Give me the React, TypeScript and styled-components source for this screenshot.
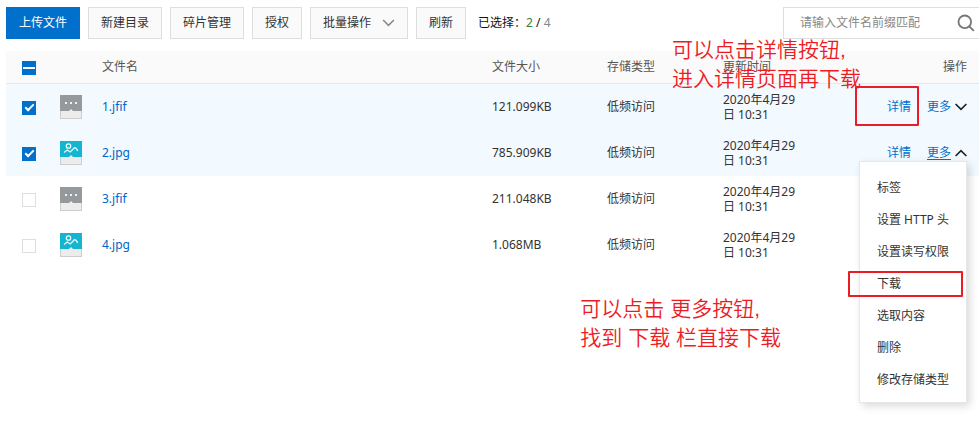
import React, { useEffect, useRef, useState } from 'react';
import styled, { createGlobalStyle, css } from 'styled-components';

const GlobalStyle = createGlobalStyle`
  *, *::before, *::after { box-sizing: border-box; }
  body {
    margin: 0;
    background: #fff;
    color: #333;
    font: 12px/16px "Noto Sans", "Noto Sans CJK SC", sans-serif;
  }
  button, input { font: inherit; }
`;

const Page = styled.main`
  position: relative;
  min-height: 100vh;
  padding: 7px 0 32px 6px;
`;

const Toolbar = styled.div`
  display: flex;
  align-items: center;
  gap: 8px;
  margin-bottom: 12px;
`;

const ToolButton = styled.button<{ $primary?: boolean }>`
  display: flex;
  align-items: center;
  gap: 11px;
  height: 32px;
  padding: 0 12px;
  white-space: nowrap;
  cursor: pointer;
  border: 1px solid ${(p) => (p.$primary ? '#0070cc' : '#dedede')};
  background: ${(p) => (p.$primary ? '#0070cc' : '#fafafa')};
  color: ${(p) => (p.$primary ? '#fff' : '#333')};
`;

const Selection = styled.span`
  margin-left: 4px;
  color: #111;
  white-space: nowrap;
`;

const Selected = styled.span`
  color: #35803a;
`;

const Total = styled.span`
  color: #808890;
`;

const SearchBox = styled.label`
  display: flex;
  align-items: center;
  flex: 0 0 196px;
  min-width: 0;
  height: 32px;
  margin-left: auto;
  padding: 0 4px 0 16px;
  border: 1px solid #dedede;
  border-right: 0;
`;

const SearchInput = styled.input`
  flex: 1;
  width: 100%;
  min-width: 0;
  padding: 0;
  border: 0;
  outline: 0;
  background: transparent;
  &::placeholder { color: #888; opacity: 1; }
`;

const FileTable = styled.table`
  width: 100%;
  table-layout: fixed;
  border-collapse: separate;
  border-spacing: 0;
`;

const Col = styled.col<{ $width?: number }>`
  ${(p) => p.$width && css`width: ${p.$width}px;`}
`;

const HeadCell = styled.th<{ $kind?: 'check' | 'actions' }>`
  height: 33px;
  padding: 0 ${(p) => (p.$kind === 'actions' ? 12 : 0)}px 0 ${(p) => (p.$kind === 'check' ? 16 : 0)}px;
  border-bottom: 1px solid #e8e8e8;
  background: #fafafa;
  color: #555;
  font-weight: 400;
  text-align: ${(p) => (p.$kind === 'actions' ? 'right' : 'left')};
`;

const Row = styled.tr<{ $active: boolean }>`
  background: ${(p) => (p.$active ? '#f2f9ff' : '#fff')};
`;

const Cell = styled.td<{ $kind?: 'check' | 'time' | 'actions' }>`
  height: 46px;
  padding: 0;
  vertical-align: middle;
  ${(p) => p.$kind === 'check' && css`padding-left: 16px;`}
  ${(p) => p.$kind === 'time' && css`padding-right: 36px; line-height: 15px;`}
  ${(p) => p.$kind === 'actions' && css`padding-right: 12px;`}
`;

const Check = styled.input`
  appearance: none;
  display: grid;
  place-items: center;
  width: 14px;
  height: 14px;
  margin: 2px 0 0;
  border: 1px solid #dedede;
  background: #fff;
  &:checked, &:indeterminate { background: #0070cc; border-color: #0070cc; }
  &:checked::after {
    content: '';
    width: 9px;
    height: 5px;
    margin-bottom: 3px;
    border: solid #fff;
    border-width: 0 0 2px 2px;
    transform: rotate(-45deg);
  }
  &:indeterminate::after {
    content: '';
    width: 12px;
    height: 2px;
    margin: 0;
    border: 0;
    background: #fff;
    transform: none;
  }
`;

const FileLink = styled.a`
  color: #0064c8;
  text-decoration: none;
`;

const Actions = styled.div`
  display: flex;
  justify-content: flex-end;
  gap: 16px;
`;

const ActionWrap = styled.div`
  position: relative;
  display: flex;
`;

const ActionLink = styled.a`
  color: #0070cc;
  text-decoration: none;
`;

const MoreButton = styled.button<{ $open: boolean }>`
  display: flex;
  align-items: center;
  gap: 4px;
  padding: 0;
  border: 0;
  background: none;
  color: #0070cc;
  cursor: pointer;
  text-decoration: ${(p) => (p.$open ? 'underline' : 'none')};
  text-underline-offset: 2px;
`;

const Menu = styled.ul`
  position: absolute;
  z-index: 2;
  top: 100%;
  right: 0;
  width: 108px;
  margin: 0;
  padding: 10px 0 6px;
  list-style: none;
  border: 1px solid #e6e6e6;
  background: #fff;
  box-shadow: 3px 3px 8px rgba(0, 0, 0, 0.15);
`;

const MenuItem = styled.li`
  position: relative;
`;

const MenuButton = styled.button`
  display: block;
  width: 100%;
  height: 32px;
  padding: 0 0 0 17px;
  border: 0;
  background: none;
  color: #333;
  text-align: left;
  white-space: nowrap;
  cursor: pointer;
  &:hover { background: #f5f5f5; }
`;

const Highlight = styled.span<{ $inset: string }>`
  position: absolute;
  inset: ${(p) => p.$inset};
  border: 2px solid #ed1c24;
  border-radius: 1px;
  pointer-events: none;
`;

const Note = styled.p<{ $top: number; $right: number }>`
  position: absolute;
  z-index: 1;
  top: ${(p) => p.$top}px;
  right: ${(p) => p.$right}px;
  margin: 0;
  color: #ed1c24;
  font-family: "Liberation Sans", "Noto Sans CJK SC", sans-serif;
  font-size: 21px;
  font-weight: 350;
  line-height: 29px;
  white-space: nowrap;
  pointer-events: none;
`;

const Chevron = ({ up, wide }: { up?: boolean; wide?: boolean }) => (
  <svg width={wide ? 13 : 12} height="8" viewBox="0 0 12 8" fill="none" stroke={wide ? '#888' : '#222'} strokeWidth={wide ? 1.5 : 1.7} aria-hidden="true">
    <path d={up ? 'M.6 7 6 1.600l5.400 5.400' : 'M.6 1 6 6.400l5.400-5.400'} />
  </svg>
);

const SearchIcon = () => (
  <svg width="18" height="18" viewBox="0 0 18 18" fill="none" stroke="#777" strokeWidth="1.8" aria-hidden="true">
    <circle cx="7.800" cy="7.800" r="6.300" />
    <path d="m12.300 12.300 4.500 4.500" />
  </svg>
);

const FileIcon = ({ image }: { image: boolean }) => (
  <svg width="22" height="24" viewBox="0 0 22 24" display="block" aria-hidden="true">
    <path d="M0 0h22v24H0z" fill="#cdcdcd" />
    <path d="M1 16h20v7H1z" fill="#ececec" />
    <path d="M0 0h22v16H0z" fill={image ? '#13b5d0' : '#96999c'} />
    <path d="m9 16 2-2 2 2z" fill="#ececec" />
    {image ? (
      <g fill="none" stroke="#e6fbff" strokeWidth="1.300">
        <circle cx="8.500" cy="5" r="2.200" />
        <path d="m4 11.500 3.200-2.500 3 2 4.300-4.300c1.500 0 2.300 1.300 3.200 3.300" />
      </g>
    ) : (
      <path d="M5 7h2v2H5zM10 7h2v2h-2zM15 7h2v2h-2z" fill="#f0f0f0" />
    )}
  </svg>
);

const files = [
  { name: '1.jfif', size: '121.099KB' },
  { name: '2.jpg', size: '785.909KB' },
  { name: '3.jfif', size: '211.048KB' },
  { name: '4.jpg', size: '1.068MB' },
];

const menuItems = ['标签', '设置 HTTP 头', '设置读写权限', '下载', '选取内容', '删除', '修改存储类型'];

export default function App() {
  const [selected, setSelected] = useState<string[]>(['1.jfif', '2.jpg']);
  const [openMenu, setOpenMenu] = useState<string | null>('2.jpg');
  const allRef = useRef<HTMLInputElement>(null);
  const all = selected.length === files.length;

  useEffect(() => {
    if (allRef.current) allRef.current.indeterminate = selected.length > 0 && !all;
  }, [selected, all]);

  const toggle = (name: string) =>
    setSelected((list) => (list.includes(name) ? list.filter((n) => n !== name) : [...list, name]));

  return (
    <>
      <GlobalStyle />
      <Page>
        <Toolbar>
          <ToolButton $primary>上传文件</ToolButton>
          <ToolButton>新建目录</ToolButton>
          <ToolButton>碎片管理</ToolButton>
          <ToolButton>授权</ToolButton>
          <ToolButton>批量操作<Chevron wide /></ToolButton>
          <ToolButton>刷新</ToolButton>
          <Selection>
            已选择：<Selected>{selected.length}</Selected> / <Total>{files.length}</Total>
          </Selection>
          <SearchBox>
            <SearchInput type="text" aria-label="搜索文件" placeholder="请输入文件名前缀匹配" />
            <SearchIcon />
          </SearchBox>
        </Toolbar>

        <FileTable>
          <colgroup>
            <Col $width={54} />
            <Col $width={42} />
            <Col />
            <Col $width={115} />
            <Col $width={116} />
            <Col $width={116} />
            <Col $width={140} />
          </colgroup>
          <thead>
            <tr>
              <HeadCell $kind="check">
                <Check
                  ref={allRef}
                  type="checkbox"
                  aria-label="全选"
                  checked={all}
                  onChange={() => setSelected(all ? [] : files.map((f) => f.name))}
                />
              </HeadCell>
              <HeadCell />
              <HeadCell>文件名</HeadCell>
              <HeadCell>文件大小</HeadCell>
              <HeadCell>存储类型</HeadCell>
              <HeadCell>更新时间</HeadCell>
              <HeadCell $kind="actions">操作</HeadCell>
            </tr>
          </thead>
          <tbody>
            {files.map((file, index) => {
              const active = selected.includes(file.name);
              const open = openMenu === file.name;
              return (
                <Row key={file.name} $active={active}>
                  <Cell $kind="check">
                    <Check type="checkbox" aria-label={file.name} checked={active} onChange={() => toggle(file.name)} />
                  </Cell>
                  <Cell><FileIcon image={file.name.endsWith('.jpg')} /></Cell>
                  <Cell><FileLink href="#">{file.name}</FileLink></Cell>
                  <Cell>{file.size}</Cell>
                  <Cell>低频访问</Cell>
                  <Cell $kind="time">2020年4月29日 10:31</Cell>
                  <Cell $kind="actions">
                    {(active || open) && (
                      <Actions>
                        <ActionWrap>
                          <ActionLink href="#">详情</ActionLink>
                          {index === 0 && <Highlight $inset="-13px -8px -11px -32px" />}
                        </ActionWrap>
                        <ActionWrap>
                          <MoreButton $open={open} aria-expanded={open} onClick={() => setOpenMenu(open ? null : file.name)}>
                            更多<Chevron up={open} />
                          </MoreButton>
                          {open && (
                            <Menu>
                              {menuItems.map((item) => (
                                <MenuItem key={item}>
                                  <MenuButton>{item}</MenuButton>
                                  {item === '下载' && <Highlight $inset="3px 3px 3px -12px" />}
                                </MenuItem>
                              ))}
                            </Menu>
                          )}
                        </ActionWrap>
                      </Actions>
                    )}
                  </Cell>
                </Row>
              );
            })}
          </tbody>
        </FileTable>

        <Note $top={35} $right={118}>可以点击详情按钮,<br />进入详情页面再下载</Note>
        <Note $top={294} $right={198}>可以点击 更多按钮,<br />找到 下载 栏直接下载</Note>
      </Page>
    </>
  );
}
